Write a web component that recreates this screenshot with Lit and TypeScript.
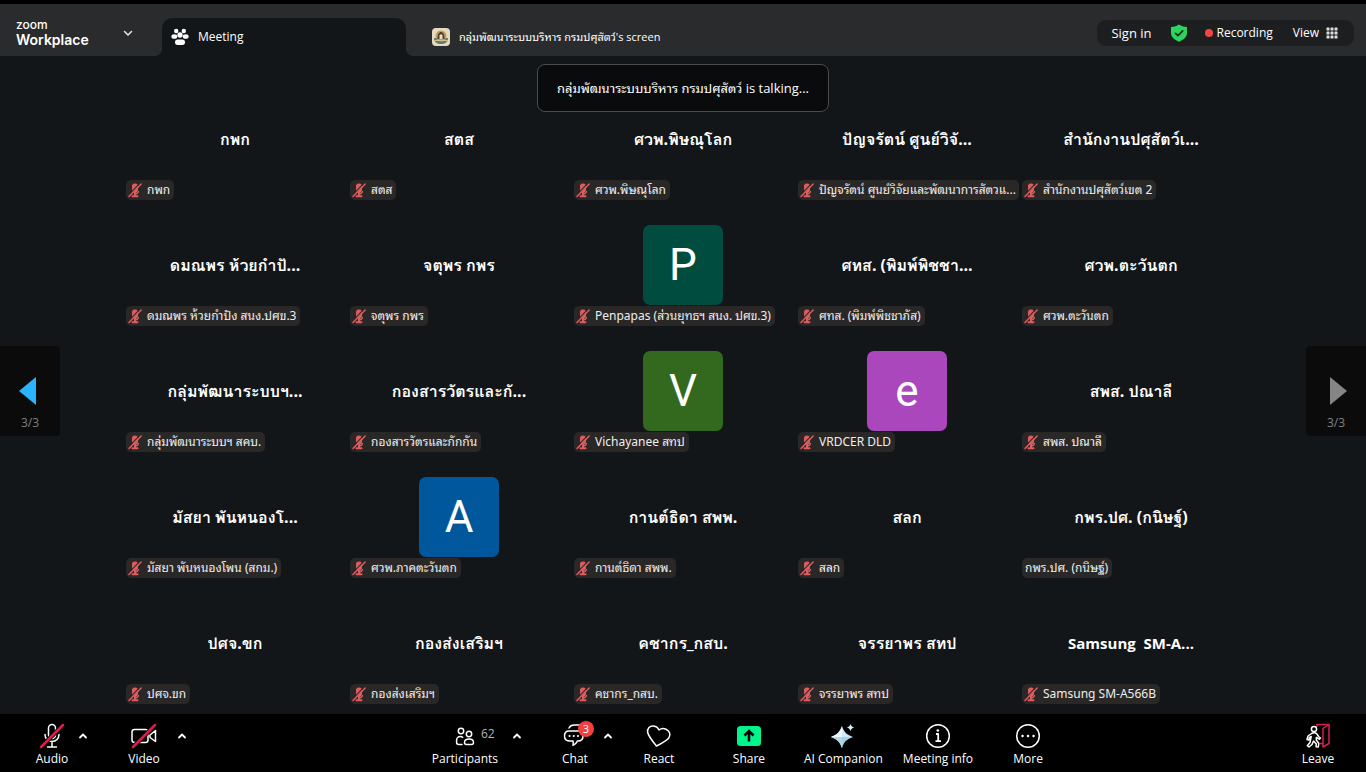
import { LitElement, html, svg, css, nothing } from "lit";
import { customElement, property } from "lit/decorators.js";

interface Person {
  title?: string;
  letter?: string;
  tone?: string;
  label: string;
  live?: boolean;
}

const people: Person[] = [
  { title: "กพก", label: "กพก" },
  { title: "สตส", label: "สตส" },
  { title: "ศวพ.พิษณุโลก", label: "ศวพ.พิษณุโลก" },
  { title: "ปัญจรัตน์ ศูนย์วิจั...", label: "ปัญจรัตน์ ศูนย์วิจัยและพัฒนาการสัตวแ..." },
  { title: "สำนักงานปศุสัตว์เ...", label: "สำนักงานปศุสัตว์เขต 2" },
  { title: "ดมณพร ห้วยกำปั...", label: "ดมณพร ห้วยกำปัง สนง.ปศข.3" },
  { title: "จตุพร กพร", label: "จตุพร กพร" },
  { letter: "P", tone: "teal", label: "Penpapas (ส่วนยุทธฯ สนง. ปศข.3)" },
  { title: "ศทส. (พิมพ์พิชชา...", label: "ศทส. (พิมพ์พิชชาภัส)" },
  { title: "ศวพ.ตะวันตก", label: "ศวพ.ตะวันตก" },
  { title: "กลุ่มพัฒนาระบบฯ...", label: "กลุ่มพัฒนาระบบฯ สคบ." },
  { title: "กองสารวัตรและกั...", label: "กองสารวัตรและกักกัน" },
  { letter: "V", tone: "green", label: "Vichayanee สทป" },
  { letter: "e", tone: "purple", label: "VRDCER DLD" },
  { title: "สพส. ปณาลี", label: "สพส. ปณาลี" },
  { title: "มัสยา พันหนองโ...", label: "มัสยา พันหนองโพน (สกม.)" },
  { letter: "A", tone: "blue", label: "ศวพ.ภาคตะวันตก" },
  { title: "กานต์ธิดา สพพ.", label: "กานต์ธิดา สพพ." },
  { title: "สลก", label: "สลก" },
  { title: "กพร.ปศ. (กนิษฐ์)", label: "กพร.ปศ. (กนิษฐ์)", live: true },
  { title: "ปศจ.ขก", label: "ปศจ.ขก" },
  { title: "กองส่งเสริมฯ", label: "กองส่งเสริมฯ" },
  { title: "คชากร_กสบ.", label: "คชากร_กสบ." },
  { title: "จรรยาพร สทป", label: "จรรยาพร สทป" },
  { title: "Samsung  SM-A...", label: "Samsung SM-A566B" },
];

const icon = (w: number, h: number, body: unknown) => html`
  <svg width=${w} height=${h} viewBox="0 0 ${w} ${h}" fill="none" stroke="#fff"
    stroke-width="1.5" stroke-linecap="round" stroke-linejoin="round" aria-hidden="true">${body}</svg>`;

const icons = {
  mic: icon(26, 26, svg`<rect x="9.5" y="1.5" width="7" height="14" rx="3.5"/><path d="M6 11.5c0 4 3 7 7 7s7-3 7-7M13 18.5V24M8.500 24h9"/><path d="M2 24 24 2" stroke="#000" stroke-width="4.500"/><path d="M2 24 24 2" stroke="#d81f4f" stroke-width="2.500"/>`),
  video: icon(26, 26, svg`<rect x="1" y="6.500" width="16" height="13" rx="2.500"/><path d="M19 12l5.500-4.500v11L19 14.500z"/><path d="M2 24 24 2" stroke="#000" stroke-width="4.500"/><path d="M2 24 24 2" stroke="#d81f4f" stroke-width="2.500"/>`),
  people: icon(20, 20, svg`<circle cx="6" cy="5" r="2.700"/><circle cx="14" cy="8" r="2.700"/><path d="M7 18.500H3.500A1.900 1.900 0 0 1 1.600 16.600V14c0-2 1.700-3.500 3.700-3.500 1 0 1.700.2 2.400.8"/><path d="M9.500 16.500c0-2.200 1.700-3.500 4.500-3.500s4.500 1.300 4.500 3.500c0 1.300-.8 2-2 2h-5c-1.200 0-2-.7-2-2z"/>`),
  chat: icon(26, 26, svg`<path d="M7 5c1-2 3-3 5-3h7M7 8h9c3 0 5 2 5 5s-2 5-5 5h-.6c-.7 2-2.400 3.400-4.400 4.400.4-1.500.3-2.900 0-4.400H8c-3.300 0-5.500-2-5.500-5S4.300 8 7 8z"/><path d="M7.500 13h.1M11.700 13h.1M15.900 13h.1" stroke-width="2"/>`),
  heart: icon(26, 26, svg`<path d="M10.500 23C8 20 2.500 13.500 1.700 9.500.9 5.500 4 2.600 7.500 3c2.500.3 4.500 1.800 5.500 4 2-1.500 4.500-1.900 7-.8 3.500 1.500 5 5.300 3 8.500-2 3.300-8.500 6.300-12.500 8.300z"/>`),
  share: icon(24, 20, svg`<rect width="24" height="20" rx="3.500" fill="#00f58b" stroke="none"/><path d="M12 15.500V5.500M7.500 9.500 12 5l4.500 4.500" stroke="#000" stroke-width="2.500" stroke-linecap="butt" stroke-linejoin="miter"/>`),
  spark: icon(26, 26, svg`<g stroke="none"><path d="M12 3c1.800 5.800 4.200 8.500 11 11-6.800 2.300-9.200 5-11 11C10 19 7.500 16.300 1 14 7.500 11.500 10 8.800 12 3z" fill="#cfeaf5"/><path d="M12 3v22C10 19 7.500 16.300 1 14 7.500 11.500 10 8.800 12 3z" fill="#eef9fd"/><path d="M1 14h22c-6.800 2.300-9.200 5-11 11C10 19 7.500 16.300 1 14z" fill="#82bcd6" opacity=".55"/><path d="M20.500 1c.7 2 1.500 2.800 3.700 3.600-2.200.8-3 1.600-3.700 3.700-.7-2.100-1.500-2.900-3.700-3.700 2.200-.8 3-1.600 3.700-3.600z" fill="#d5eef7"/></g>`),
  info: icon(26, 26, svg`<circle cx="13" cy="13" r="11.300"/><path d="M11 11h2.200v7M10.500 18.200h5.500" stroke-width="1.800" stroke-linecap="butt"/><circle cx="12.800" cy="7.500" r="1.300" fill="#fff" stroke="none"/>`),
  more: icon(26, 26, svg`<circle cx="13" cy="13" r="11.300"/><path d="M7.500 13h.1M13 13h.1M18.500 13h.1" stroke-width="2.400"/>`),
  leave: icon(26, 26, svg`<path d="M12 1.500h12v19L18 24V5.500l6-4M12 1.500V3" stroke="#d81f4f"/><path d="M15.500 20.500H18" stroke="#d81f4f"/><circle cx="9" cy="6" r="2.600"/><path d="M6.500 10.500c2-1 4-1 5.500.5l1.500 2.500 2 1.500-1.200 1.200-3-1.700v2.500l2.500 3.500-.5 3.500-2.300-.3.3-2.700-2.800-3-1.500 3.500L4 24l-1.700-1.300L5 19.500l1.200-6-1.700 1-.7 2.500-1.800-.5 1-3.500z"/>`),
  chevronUp: icon(12, 12, svg`<path d="M3 7.500 6 4.500l3 3" stroke-width="1.800"/>`),
  chevronDown: icon(12, 12, svg`<path d="M2.500 4.500 6 8l3.500-3.500" stroke="#e8e8e8"/>`),
  muted: icon(16, 16, svg`<g stroke="#e05a5e"><rect x="5" y="1.500" width="6" height="9" rx="2.800" fill="#e05a5e" stroke="none"/><path d="M8 10.500V14M5.500 14.200h5" stroke-width="2"/><path d="M11.500 9.500c-.5 1.500-1.800 2.500-3.500 2.500" stroke-width="1.300"/><path d="M1.200 13.400 13 1.200" stroke="#2a2727" stroke-width="1.100"/><path d="M2 14.500 14.200 2" stroke-width="1.500"/></g>`),
  crowd: icon(18, 18, svg`<g fill="#fff" stroke="none"><circle cx="5.200" cy="3" r="2.200"/><circle cx="12.800" cy="3" r="2.200"/><circle cx="9" cy="7" r="2.700"/><ellipse cx="3.300" cy="8.500" rx="2.900" ry="2.300"/><ellipse cx="14.700" cy="8.500" rx="2.900" ry="2.300"/><rect x="4" y="11.500" width="10" height="5.500" rx="2.700"/></g>`),
  shield: icon(18, 18, svg`<path d="M9 .5c2.300 1.600 4.600 2.300 8 2.600v6c0 4-3.500 6.900-8 8.600-4.500-1.700-8-4.600-8-8.600v-6C4.400 2.800 6.700 2.100 9 .5z" fill="#2bd45f" stroke="none"/><path d="m5.500 9.300 2.500 2.400 4.700-4.900" stroke="#17321f" stroke-width="1.700"/>`),
  dots: icon(12, 12, svg`<g fill="#dedede" stroke="none">${[0, 4, 8].map((y) => [0, 4, 8].map((x) => svg`<rect x=${x + 0.5} y=${y + 0.5} width="3" height="3" rx=".6"/>`))}</g>`),
  emblem: icon(18, 18, svg`<g stroke="none"><rect width="18" height="18" rx="4" fill="#e6dac0"/><path d="M2 10h14c0 4-3 6-7 6s-7-2-7-6z" fill="#5f7d70"/><circle cx="9" cy="8" r="5.500" fill="#c49a5c"/><path d="M5.500 11c0-5 1.500-7 3.500-7s3.500 2 3.500 7z" fill="#4c4034"/><path d="M7.500 11V7.500L9 6l1.500 1.500V11z" fill="#e9dcc2"/><path d="M3 12.500h12" stroke="#d5c08f" stroke-width="1.200"/></g>`),
};

@customElement("meeting-tile")
class MeetingTile extends LitElement {
  @property({ attribute: false }) person!: Person;

  static styles = css`
    :host { display: grid; grid-template: minmax(0, 1fr) / minmax(0, 1fr); min-width: 0; }
    .face, .label { grid-area: 1 / 1; }
    .face { place-self: center; white-space: pre; font-family: "Open Sans", "Loma", sans-serif;
      font-size: 16px; line-height: 24px; font-weight: 700; }
    .latin { font-size: 15px; }
    .avatar { width: 80px; height: 80px; border-radius: 7px; display: grid; place-items: center;
      font: 400 44px/80px Roboto, sans-serif; }
    .teal { background: #004d40; }
    .green { background: #33691e; }
    .purple { background: #ab47bc; }
    .blue { background: #01579b; }
    .label { place-self: end start; display: flex; align-items: center; gap: 4px; box-sizing: border-box;
      height: 20px; max-width: calc(100% - 3px); margin: 0 0 2px 3px; padding: 0 4px 0 1px;
      border-radius: 5px; background: #2a2727; overflow: hidden; }
    .live { padding-left: 3px; }
    .who { font-family: "Noto Sans", "Noto Sans Thai Looped", sans-serif;
      font-size: 12px; line-height: 20px; white-space: nowrap; color: #eee; }
    svg { display: block; flex: none; }
  `;

  render() {
    const p = this.person;
    const latin = /^[\x20-\x7e]+$/.test(p.title ?? "");
    return html`
      ${p.letter
        ? html`<div class="face avatar ${p.tone}">${p.letter}</div>`
        : html`<div class="face ${latin ? "latin" : ""}">${p.title}</div>`}
      <div class="label ${p.live ? "live" : ""}">
        ${p.live ? nothing : icons.muted}<span class="who">${p.label}</span>
      </div>`;
  }
}

@customElement("app-root")
class AppRoot extends LitElement {
  static styles = css`
    :host { display: flex; flex-direction: column; box-sizing: border-box; min-height: 100vh;
      border-top: 4px solid #000; background: #131619; color: #fff;
      font-family: "Open Sans", "Noto Sans Thai Looped", sans-serif;
      font-size: 12px; line-height: 16px; }
    button { font: inherit; color: inherit; background: none; border: 0; padding: 0; margin: 0; cursor: pointer; }
    svg { display: block; flex: none; }

    .top { display: flex; height: 52px; background: #2a2b2d; }
    .brand { display: flex; align-items: center; justify-content: space-between; width: 162px;
      box-sizing: border-box; padding: 6px 28px 0 16px; }
    .logo { display: flex; flex-direction: column; text-align: left; font-family: Inter, sans-serif; }
    .zoom { font-size: 12px; line-height: 14px; font-weight: 500; }
    .work { font-size: 14px; line-height: 16px; font-weight: 600; }
    .tab { display: flex; align-items: center; gap: 9px; }
    .active { position: relative; width: 244px; margin-top: 14px; padding-left: 9px; background: #131619;
      border-radius: 10px 10px 0 0; }
    .active::before, .active::after { content: ""; position: absolute; bottom: 0; width: 8px; height: 8px; }
    .active::before { right: 100%; background: radial-gradient(circle at 0 0, transparent 8px, #131619 8px); }
    .active::after { left: 100%; background: radial-gradient(circle at 100% 0, transparent 8px, #131619 8px); }
    .other { margin: 14px auto 0 26px; font-size: 11px; }
    .tools { display: flex; align-items: center; height: 26px; margin: 16px 12px 0 0; padding: 0 16px 0 14px;
      border-radius: 9px; background: #1d1e20; }
    .sign { font-size: 13px; margin-right: 18px; }
    .rec { display: flex; align-items: center; gap: 4px; margin: 0 20px 0 17px; }
    .rec::before { content: ""; width: 8px; height: 8px; border-radius: 50%; background: #f04646; }
    .view { display: flex; align-items: center; gap: 7px; }

    .stage { position: relative; flex: 1; display: flex; align-items: center; padding: 20px 0 8px; }
    .grid { flex: 1; align-self: stretch; display: grid; margin: 0 63px;
      grid-template-columns: repeat(5, minmax(0, 1fr)); grid-auto-rows: minmax(126px, 1fr); }
    .toast { position: absolute; top: 8px; left: 50%; transform: translateX(-50%); box-sizing: border-box;
      padding: 13px 19px; border: 1px solid #4a4b4d; border-radius: 8px; background: #0a0b0d;
      font-size: 13px; line-height: 20px; white-space: nowrap; }
    .page { display: flex; flex-direction: column; align-items: center; justify-content: flex-end; gap: 10px;
      width: 60px; height: 90px; padding-bottom: 5px; box-sizing: border-box; background: #0b0b0b; color: #808080; }
    .prev { border-radius: 0 4px 4px 0; }
    .next { border-radius: 4px 0 0 4px; }

    .bar { display: flex; align-items: flex-start; justify-content: space-between; height: 58px;
      box-sizing: border-box; padding: 9px 12px 0 27px; background: #000; }
    .group { display: flex; }
    .center { margin-left: 22px; }
    .split { display: flex; align-items: flex-start; }
    .item { position: relative; display: flex; flex-direction: column; align-items: center; gap: 2px;
      box-sizing: border-box; min-width: 90px; padding: 0 10px; white-space: nowrap; }
    .art { height: 26px; display: flex; align-items: center; }
    .split .item { min-width: 50px; padding: 0 6px; }
    .more { padding: 7px 0; }
    .camera { margin-left: 23px; }
    .camera .item { min-width: 64px; }
    .crew .item { min-width: 92px; }
    .talk { margin-left: 25px; }
    .talk .item { min-width: 54px; }
    .count { position: absolute; left: 62px; top: 3px; color: #b4b4b4; }
    .badge { position: absolute; left: 30px; top: -2px; width: 16px; height: 16px; border-radius: 50%;
      background: #f04040; font-size: 11px; line-height: 16px; text-align: center; }
    .leave { min-width: 72px; }
  `;

  item(label: string, art: unknown, extra: unknown = nothing, cls = "") {
    return html`<button class="item ${cls}"><span class="art">${art}</span>${extra}<span>${label}</span></button>`;
  }

  split(label: string, art: unknown, cls = "", extra: unknown = nothing) {
    return html`<div class="split ${cls}">${this.item(label, art, extra)}
      <button class="more" aria-label="${label} options">${icons.chevronUp}</button></div>`;
  }

  render() {
    return html`
      <header class="top">
        <button class="brand">
          <span class="logo"><span class="zoom">zoom</span><span class="work">Workplace</span></span>
          ${icons.chevronDown}
        </button>
        <button class="tab active">${icons.crowd}<span>Meeting</span></button>
        <button class="tab other">${icons.emblem}<span>กลุ่มพัฒนาระบบบริหาร กรมปศุสัตว์'s screen</span></button>
        <div class="tools">
          <button class="sign">Sign in</button>
          ${icons.shield}
          <span class="rec">Recording</span>
          <button class="view">View ${icons.dots}</button>
        </div>
      </header>
      <main class="stage">
        <button class="page prev" aria-label="Previous page">
          <svg width="22" height="28" viewBox="0 0 22 28"><path d="M17 0v28L0 14z" fill="#2ab4ff"/></svg>
          <span>3/3</span>
        </button>
        <section class="grid">
          ${people.map((p) => html`<meeting-tile .person=${p}></meeting-tile>`)}
        </section>
        <button class="page next" aria-label="Next page">
          <svg width="22" height="28" viewBox="0 0 22 28"><path d="M5 0v28l17-14z" fill="#858585"/></svg>
          <span>3/3</span>
        </button>
        <div class="toast" role="status">กลุ่มพัฒนาระบบบริหาร กรมปศุสัตว์ is talking...</div>
      </main>
      <footer class="bar">
        <div class="group">
          ${this.split("Audio", icons.mic)}
          ${this.split("Video", icons.video, "camera")}
        </div>
        <div class="group center">
          ${this.split("Participants", icons.people, "crew", html`<span class="count">62</span>`)}
          ${this.split("Chat", icons.chat, "talk", html`<span class="badge">3</span>`)}
          ${this.item("React", icons.heart)}
          ${this.item("Share", icons.share)}
          ${this.item("AI Companion", icons.spark)}
          ${this.item("Meeting info", icons.info)}
          ${this.item("More", icons.more)}
        </div>
        ${this.item("Leave", icons.leave, nothing, "leave")}
      </footer>`;
  }
}
